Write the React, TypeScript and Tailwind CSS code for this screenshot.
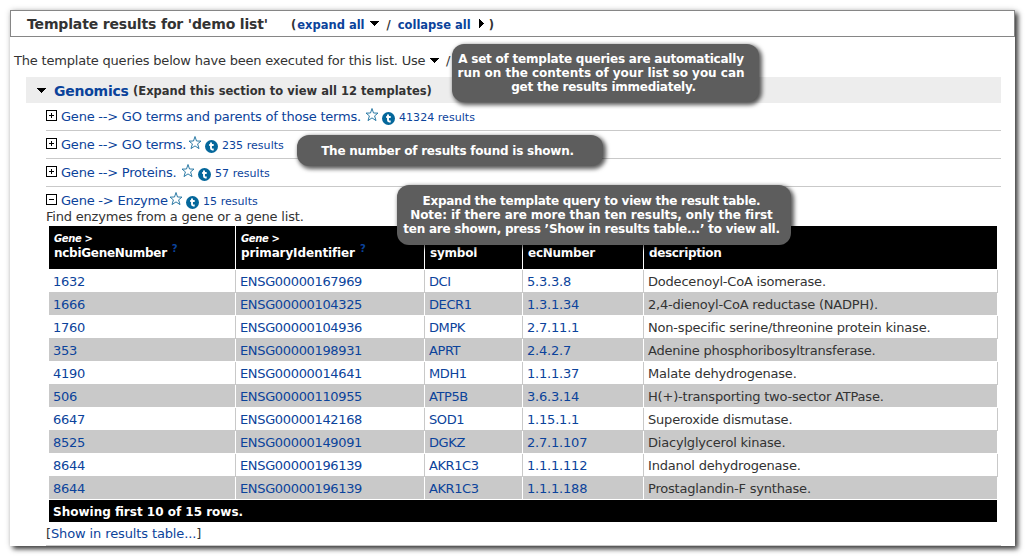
import React from "react";

const rows = [
  ["1632", "ENSG00000167969", "DCI", "5.3.3.8", "Dodecenoyl-CoA isomerase."],
  ["1666", "ENSG00000104325", "DECR1", "1.3.1.34", "2,4-dienoyl-CoA reductase (NADPH)."],
  ["1760", "ENSG00000104936", "DMPK", "2.7.11.1", "Non-specific serine/threonine protein kinase."],
  ["353", "ENSG00000198931", "APRT", "2.4.2.7", "Adenine phosphoribosyltransferase."],
  ["4190", "ENSG00000014641", "MDH1", "1.1.1.37", "Malate dehydrogenase."],
  ["506", "ENSG00000110955", "ATP5B", "3.6.3.14", "H(+)-transporting two-sector ATPase."],
  ["6647", "ENSG00000142168", "SOD1", "1.15.1.1", "Superoxide dismutase."],
  ["8525", "ENSG00000149091", "DGKZ", "2.7.1.107", "Diacylglycerol kinase."],
  ["8644", "ENSG00000196139", "AKR1C3", "1.1.1.112", "Indanol dehydrogenase."],
  ["8644", "ENSG00000196139", "AKR1C3", "1.1.1.188", "Prostaglandin-F synthase."],
];

const columnStyles = [
  "text-[#0b439b] tracking-[-0.3px]",
  "text-[#0b439b] tracking-[-0.35px]",
  "text-[#0b439b] tracking-[-0.4px]",
  "text-[#0b439b] tracking-[-0.2px]",
  "tracking-[-0.2px]",
];

const templates = [
  { title: "Gene --> GO terms and parents of those terms.", count: "41324 results", width: "w-[300px]" },
  { title: "Gene --> GO terms.", count: "235 results", width: "w-[123px]" },
  { title: "Gene --> Proteins.", count: "57 results", width: "w-[116px]" },
];

const grid = "grid grid-cols-[187px_189px_98px_121px_354px]";

function Down({ className = "" }: { className?: string }) {
  return (
    <svg className={"shrink-0 " + className} width="9" height="5" viewBox="0 0 9 5" shapeRendering="crispEdges">
      <path d="M0 0H9V1H8V2H7V3H6V4H5V5H4V4H3V3H2V2H1V1H0Z" fill="#000" />
    </svg>
  );
}

function Right({ className = "" }: { className?: string }) {
  return (
    <svg className={"shrink-0 " + className} width="5" height="9" viewBox="0 0 5 9" shapeRendering="crispEdges">
      <path d="M0 0H1V1H2V2H3V3H4V4H5V5H4V6H3V7H2V8H1V9H0Z" fill="#000" />
    </svg>
  );
}

function Toggle({ open = false }: { open?: boolean }) {
  return (
    <svg className="mt-[7px] shrink-0" width="11" height="11" viewBox="0 0 11 11" shapeRendering="crispEdges">
      <path d="M.5 .5H10.5V10.5H.5Z" fill="#fff" stroke="#000" />
      <path d={open ? "M3 5.5H8" : "M3 5.5H8M5.5 3V8"} stroke="#000" fill="none" />
    </svg>
  );
}

function Star() {
  return (
    <svg className="mt-[4px] shrink-0" width="14" height="15" viewBox="0 0 14 15">
      <path
        d="M7 1.5 8.5 6 13 6.1 9.6 8.9 11 13.6 7 10.9 3 13.6 4.4 8.9 1 6.1 5.5 6Z"
        fill="#fff"
        stroke="#2d7ba6"
        strokeWidth="1"
      />
    </svg>
  );
}

function TBadge() {
  return (
    <svg className="ml-[3px] mt-[9px] shrink-0" width="13" height="13" viewBox="0 0 13 13">
      <circle cx="6.5" cy="6.5" r="6.5" fill="#04679b" />
      <path d="M6 2.6V8.3Q6 9.5 7.2 9.5H8.7M4.2 5H8.7" stroke="#fff" strokeWidth="1.9" fill="none" />
    </svg>
  );
}

function TemplateRow({ title, count, width, open = false }: { title: string; count: string; width: string; open?: boolean }) {
  return (
    <div className="flex h-[27px] items-start whitespace-nowrap text-[#0b439b]">
      <Toggle open={open} />
      <span className={"ml-[4px] mt-[6px] shrink-0 leading-4 tracking-[-0.22px] " + width}>{title}</span>
      <span className="w-[4px] shrink-0" />
      <Star />
      <TBadge />
      <span className="ml-[4px] mt-[7px] text-[11px] leading-4 tracking-[0.05px]">{count}</span>
    </div>
  );
}

function Head({ parent, name, help, cell = "", tracking = "" }: { parent?: string; name: string; help?: boolean; cell?: string; tracking?: string }) {
  return (
    <div className={"h-[43px] pl-[5px] pt-[6px] " + cell}>
      <div className="h-[13px] text-[10px] font-bold italic leading-[13px] tracking-[-0.35px]">{parent}</div>
      <div className={"flex whitespace-nowrap text-[12px] font-bold leading-4 " + tracking}>
        {name}
        {help && <span className="-mt-[4px] ml-[5px] text-[10px] text-[#0b439b]">?</span>}
      </div>
    </div>
  );
}

function Note({ place, lines }: { place: string; lines: { text: string; tracking: string }[] }) {
  return (
    <div
      className={
        "absolute flex flex-col items-center justify-center whitespace-nowrap rounded-[12px] bg-[#5d5d5d] text-[12px] font-bold leading-[14px] text-white shadow-[2px_2px_4px_1px_rgba(0,0,0,0.65)] " +
        place
      }
    >
      {lines.map((l) => (
        <div key={l.text} className={l.tracking}>{l.text}</div>
      ))}
    </div>
  );
}

export default function App() {
  return (
    <div className="relative h-[557px] w-[1026px] overflow-hidden bg-white p-[10px] font-['DejaVu_Sans',sans-serif] text-[13px] text-[#333]">
      <div className="h-[536px] w-[1005px] bg-white shadow-[3px_3px_5px_0px_rgba(0,0,0,0.75),0_0_6px_rgba(0,0,0,0.15)]">
        <header className="flex h-[27px] items-center whitespace-nowrap border border-[#868686] pl-[16px] font-bold">
          <h1 className="w-[264px] pt-px text-[14px] tracking-[-0.15px]">Template results for 'demo list'</h1>
          <div className="mt-[3px] flex items-center text-[11.5px] leading-4">
            <span>(</span>
            <span className="ml-px text-[#0b439b]">expand all</span>
            <Down className="-mt-[3px] ml-[5px] mr-[8px]" />
            <span>/</span>
            <span className="ml-[7px] text-[#0b439b]">collapse all</span>
            <Right className="-mt-[3px] ml-[8px] mr-[5px]" />
            <span>)</span>
          </div>
        </header>

        <p className="flex h-[40px] items-center whitespace-nowrap pl-[4px] pt-[7px]">
          <span className="w-[411px] tracking-[-0.2px]">The template queries below have been executed for this list. Use</span>
          <Down className="ml-[5px] mr-[7px]" />/
        </p>

        <section className="ml-[16px] w-[975px]">
          <h2 className="flex h-[26px] items-center whitespace-nowrap bg-[#ededed] pl-[11px] font-bold">
            <Down />
            <span className="ml-[8px] w-[79px] pt-[2px] text-[14px] tracking-[-0.25px] text-[#0b439b]">Genomics</span>
            <span className="mt-[3px] text-[11.5px] tracking-[0.02px]">(Expand this section to view all 12 templates)</span>
          </h2>

          <div className="ml-[20px] flex h-[443px] flex-col border-b border-[#c9c9c9]">
            {templates.map((t) => (
              <div key={t.title} className="border-b border-[#c9c9c9]">
                <TemplateRow {...t} />
              </div>
            ))}
            <TemplateRow title="Gene -> Enzyme" count="15 results" width="w-[104px]" open />
            <p className="-mt-[6px] h-[18px] whitespace-nowrap leading-[17px] tracking-[-0.2px]">Find enzymes from a gene or a gene list.</p>

            <div className="ml-[3px] w-[949px]">
              <div className={grid + " w-[948px] overflow-hidden bg-black text-white"}>
                <Head parent="Gene >" name="ncbiGeneNumber" help tracking="tracking-[-0.28px]" cell="border-r border-white" />
                <Head parent="Gene >" name="primaryIdentifier" help tracking="tracking-[-0.12px]" cell="border-r border-white" />
                <Head name="symbol" tracking="tracking-[-0.2px]" cell="border-r border-white" />
                <Head name="ecNumber" tracking="tracking-[-0.25px]" cell="border-r border-white" />
                <Head name="description" tracking="tracking-[-0.35px]" />
              </div>
              {rows.map((r, i) => (
                <div key={i} className={grid + " h-[23px] " + (i % 2 ? "bg-[#c9c9c9]" : "bg-white")}>
                  {r.map((c, j) => (
                    <div
                      key={j}
                      className={
                        "mt-px whitespace-nowrap border-r pl-[4px] pt-[4px] leading-4 " +
                        (i % 2 ? "border-white " : "border-[#c9c9c9] ") +
                        columnStyles[j]
                      }
                    >
                      {c}
                    </div>
                  ))}
                </div>
              ))}
              <div className="mt-px h-[22px] w-[948px] bg-black pl-[4px] pt-[4px] text-[12px] font-bold leading-4 text-white">
                Showing first 10 of 15 rows.
              </div>
            </div>
            <p className="pt-[4px] leading-4 tracking-[-0.12px]">
              [<span className="text-[#0b439b]">Show in results table...</span>]
            </p>
          </div>
        </section>
      </div>

      <Note
        place="left-[452px] top-[44px] h-[58px] w-[307px] pr-[9px]"
        lines={[
          { text: "A set of template queries are automatically", tracking: "tracking-[-0.22px]" },
          { text: "run on the contents of your list so you can", tracking: "tracking-[-0.02px]" },
          { text: "get the results immediately.", tracking: "ml-[5px] tracking-[-0.25px]" },
        ]}
      />
      <Note
        place="left-[297px] top-[135px] h-[31px] w-[306px] pr-[5px]"
        lines={[{ text: "The number of results found is shown.", tracking: "tracking-[-0.22px]" }]}
      />
      <Note
        place="left-[397px] top-[185px] h-[60px] w-[394px] pr-[5px]"
        lines={[
          { text: "Expand the template query to view the result table.", tracking: "tracking-[-0.28px]" },
          { text: "Note: if there are more than ten results, only the first", tracking: "tracking-[-0.05px]" },
          { text: "ten are shown, press ’Show in results table...’ to view all.", tracking: "tracking-[-0.24px]" },
        ]}
      />
    </div>
  );
}
